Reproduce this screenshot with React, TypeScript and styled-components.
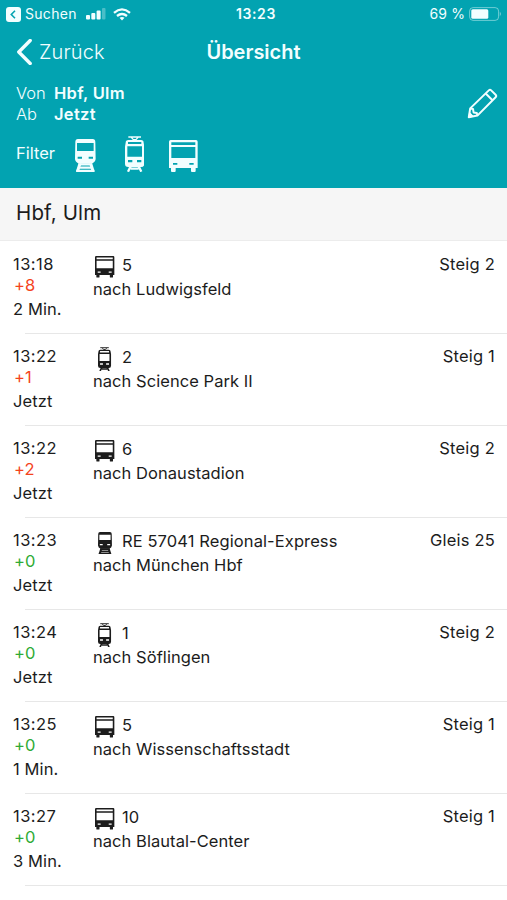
import React from "react";
import styled, { createGlobalStyle } from "styled-components";

const GlobalStyle = createGlobalStyle`
  * { box-sizing: border-box; }
  body { margin: 0; background: #fff; }
`;

const TEAL = "#02a3b1";

const Screen = styled.main`
  width: 507px;
  height: 900px;
  overflow: hidden;
  background: #fff;
  color: #1c1c1c;
  font-family: Inter, "Liberation Sans", sans-serif;
  white-space: nowrap;
`;

const Header = styled.header`
  height: 188px;
  background: ${TEAL};
  color: #f2feff;
`;

const StatusBar = styled.div`
  display: grid;
  grid-template-columns: 1fr auto 1fr;
  align-items: center;
  height: 28px;
  padding: 0 5px 0 6px;
  font-size: 14px;
  line-height: 28px;
`;

const StatusGroup = styled.div<{ $end?: boolean }>`
  display: flex;
  align-items: center;
  justify-content: ${(p) => (p.$end ? "flex-end" : "flex-start")};
  height: 28px;
`;

const BackApp = styled.span`
  width: 52px;
  margin: 0 9px 0 4px;
  letter-spacing: 0.3px;
`;

const Clock = styled.span`
  font-weight: 600;
  letter-spacing: 0.6px;
  margin-left: 4px;
`;

const Charge = styled.span`
  margin-right: 4px;
  letter-spacing: 0.1px;
`;

const Signal = styled.svg`
  margin-right: 7px;
`;

const NavBar = styled.nav`
  display: grid;
  grid-template-columns: 1fr auto 1fr;
  align-items: center;
  height: 48px;
  padding: 0 16px;
`;

const Back = styled.span`
  display: flex;
  align-items: center;
  gap: 7px;
  font-size: 20px;
  font-weight: 350;
  letter-spacing: 0.15px;
`;

const Title = styled.h1`
  margin: 0;
  font-size: 20px;
  font-weight: 600;
  letter-spacing: 0;
`;

const Query = styled.section`
  display: flex;
  justify-content: space-between;
  height: 57px;
  padding: 7px 9px 0 16px;
`;

const QueryGrid = styled.dl`
  display: grid;
  grid-template-columns: 38px auto;
  grid-auto-rows: 21px;
  margin: 0;
  font-size: 16.5px;
  line-height: 21px;
`;

const QueryLabel = styled.dt`
  font-weight: 350;
`;

const QueryValue = styled.dd`
  margin: 0;
  font-weight: 600;
  letter-spacing: 0.3px;
`;

const EditIcon = styled.svg`
  margin-top: 4px;
`;

const Filters = styled.div`
  display: flex;
  align-items: flex-start;
  padding: 3px 0 0 16px;
  font-size: 16.5px;
`;

const FilterLabel = styled.span`
  width: 45px;
  padding-top: 6px;
  line-height: 22px;
  font-weight: 400;
`;

const FilterItem = styled.span`
  display: flex;
  align-items: flex-end;
  justify-content: center;
  width: 49px;
  height: 36px;
`;

const StopName = styled.h2`
  height: 53px;
  margin: 0;
  padding-left: 16px;
  background: #f6f6f6;
  border-bottom: 1px solid #ececec;
  font-size: 20.5px;
  font-weight: 400;
  letter-spacing: 0.15px;
  line-height: 50px;
`;

const List = styled.ul`
  margin: 1px 0 0;
  padding: 0;
  list-style: none;
`;

const Departure = styled.li`
  display: grid;
  grid-template-columns: 80px 1fr auto;
  height: 92px;
  padding: 10px 12px 0 13px;
  font-size: 16.5px;
  letter-spacing: 0.1px;
  line-height: 24px;
  background: linear-gradient(#e7e7e7, #e7e7e7) 25px 100% / 100% 1px no-repeat;
`;

const Times = styled.div`
  display: flex;
  flex-direction: column;
`;

const Time = styled.span`
  letter-spacing: 0.45px;
`;

const Delay = styled.span<{ $late: boolean }>`
  height: 21px;
  padding-left: 1px;
  line-height: 18px;
  color: ${(p) => (p.$late ? "#f4431c" : "#2fab35")};
`;

const Trip = styled.div`
  display: flex;
  flex-direction: column;
  padding-top: 1px;
`;

const Line = styled.div`
  display: flex;
  gap: 5px;
  height: 24px;
  line-height: 25px;
`;

const LineIcon = styled.span`
  display: flex;
  align-items: center;
  justify-content: center;
  width: 24px;
  height: 28px;
`;

const Destination = styled.span`
  line-height: 24px;
  letter-spacing: 0.05px;
`;

const Platform = styled.span`
  letter-spacing: 0.2px;
`;

type Mode = "bus" | "tram" | "train";

const SHAPES: Record<Mode, { w: number; h: number; art: React.ReactNode }> = {
  bus: {
    w: 86,
    h: 96,
    art: (
      <path
        fillRule="evenodd"
        d="M5 0H81Q86 0 86 5V84H80V93Q80 96 77 96H69Q66 96 66 93V84H20V93Q20 96 17 96H9Q6 96 6 93V84H0V5Q0 0 5 0ZM7 7V15H79V7ZM7 21V54H79V21ZM12 69V74H25V69ZM61 69V74H74V69Z"
      />
    ),
  },
  tram: {
    w: 58,
    h: 108,
    art: (
      <>
        <path d="M10 3H48M19 4L25 11H33L39 4" fill="none" stroke="currentColor" strokeWidth="4" />
        <path
          fillRule="evenodd"
          d="M10 12H48Q56 12 56 20L58 32V83Q58 93 48 93H10Q0 93 0 83V32L2 20Q2 12 10 12ZM9 18V24H49V18ZM7 31V62H51V31ZM9 72V79H22V72ZM36 72V79H49V72Z"
        />
        <path d="M17 91L9 107M41 91L49 107M17 98H41" fill="none" stroke="currentColor" strokeWidth="7" />
      </>
    ),
  },
  train: {
    w: 62,
    h: 100,
    art: (
      <>
        <path
          fillRule="evenodd"
          d="M9 0H53Q61 0 61 9L62 60Q61 70 50 74H12Q1 70 0 60L1 9Q1 0 9 0ZM6 12V36H56V12ZM8 53V59H21V53ZM41 53V59H54V53Z"
        />
        <path d="M15 76H47M11 86H51M4 96H58" stroke="currentColor" strokeWidth="7" />
        <path d="M15 73L7 99M47 73L55 99" stroke="currentColor" strokeWidth="9" />
      </>
    ),
  },
};

function ModeIcon({ mode, scale }: { mode: Mode; scale: number }) {
  const { w, h, art } = SHAPES[mode];
  return (
    <svg width={w * scale} height={h * scale} viewBox={`0 0 ${w} ${h}`} fill="currentColor">
      {art}
    </svg>
  );
}

const departures: {
  time: string;
  delay: number;
  wait: string;
  mode: Mode;
  line: string;
  to: string;
  platform: string;
}[] = [
  { time: "13:18", delay: 8, wait: "2 Min.", mode: "bus", line: "5", to: "Ludwigsfeld", platform: "Steig 2" },
  { time: "13:22", delay: 1, wait: "Jetzt", mode: "tram", line: "2", to: "Science Park II", platform: "Steig 1" },
  { time: "13:22", delay: 2, wait: "Jetzt", mode: "bus", line: "6", to: "Donaustadion", platform: "Steig 2" },
  { time: "13:23", delay: 0, wait: "Jetzt", mode: "train", line: "RE 57041 Regional-Express", to: "München Hbf", platform: "Gleis 25" },
  { time: "13:24", delay: 0, wait: "Jetzt", mode: "tram", line: "1", to: "Söflingen", platform: "Steig 2" },
  { time: "13:25", delay: 0, wait: "1 Min.", mode: "bus", line: "5", to: "Wissenschaftsstadt", platform: "Steig 1" },
  { time: "13:27", delay: 0, wait: "3 Min.", mode: "bus", line: "10", to: "Blautal-Center", platform: "Steig 1" },
];

export default function App() {
  return (
    <Screen>
      <GlobalStyle />
      <Header>
        <StatusBar>
          <StatusGroup>
            <svg width="15" height="15" viewBox="0 0 15 15">
              <rect width="15" height="15" rx="3" fill="#f2feff" />
              <path d="M9 3.8L5.3 7.5L9 11.2" fill="none" stroke={TEAL} strokeWidth="1.6" />
            </svg>
            <BackApp>Suchen</BackApp>
            <Signal width="20" height="12" viewBox="0 0 20 12" fill="#f2feff">
              <rect x="0" y="7" width="4" height="4.5" rx="1" />
              <rect x="5.3" y="5" width="4" height="6.5" rx="1" />
              <rect x="10.6" y="2.5" width="4" height="9" rx="1" />
              <rect x="16" y="0" width="3.5" height="11.5" rx="1" opacity="0.3" />
            </Signal>
            <svg width="18" height="13" viewBox="0 0 18 13" fill="none" stroke="#f2feff" strokeWidth="2.3">
              <path d="M1 4.8Q9-2 17 4.8M4 8Q9 4 14 8" />
              <path d="M6.5 9.8Q9 8 11.5 9.8L9 12.4Z" fill="#f2feff" stroke="none" />
            </svg>
          </StatusGroup>
          <Clock>13:23</Clock>
          <StatusGroup $end>
            <Charge>69 %</Charge>
            <svg width="33" height="14" viewBox="0 0 33 14">
              <rect x="0.6" y="0.6" width="29" height="12.8" rx="3.5" fill="none" stroke="#f2feff" opacity="0.45" />
              <rect x="2.3" y="2.3" width="17" height="9.4" rx="1.5" fill="#f2feff" />
              <path d="M30.8 4.8Q33 7 30.8 9.2Z" fill="#f2feff" opacity="0.5" />
            </svg>
          </StatusGroup>
        </StatusBar>
        <NavBar>
          <Back>
            <svg width="16" height="26" viewBox="0 0 16 26" fill="none" stroke="#f2feff" strokeWidth="3.4">
              <path d="M14.2 1.5L2.8 13L14.2 24.5" strokeLinecap="round" strokeLinejoin="round" />
            </svg>
            Zurück
          </Back>
          <Title>Übersicht</Title>
        </NavBar>
        <Query>
          <QueryGrid>
            <QueryLabel>Von</QueryLabel>
            <QueryValue>Hbf, Ulm</QueryValue>
            <QueryLabel>Ab</QueryLabel>
            <QueryValue>Jetzt</QueryValue>
          </QueryGrid>
          <EditIcon width="31" height="32" viewBox="0 0 31 32" fill="none" stroke="#f2feff" strokeWidth="2" strokeLinejoin="round">
            <path d="M1.8 30.2L3.2 21.4L21.8 3.4Q23 2.2 24.2 3.4L28.6 7.8Q29.8 9 28.6 10.2L10.4 28.6Z" />
            <path d="M18.7 6.5L25.5 13.3M3.2 21.4L6 22L6.6 25.4L9.8 26L10.4 28.6" />
            <path d="M1.8 30.2L2.6 25.4L6.4 29.3Z" fill="#f2feff" strokeWidth="1" />
          </EditIcon>
        </Query>
        <Filters>
          <FilterLabel>Filter</FilterLabel>
          <FilterItem><ModeIcon mode="train" scale={1 / 3} /></FilterItem>
          <FilterItem><ModeIcon mode="tram" scale={1 / 3} /></FilterItem>
          <FilterItem><ModeIcon mode="bus" scale={1 / 3} /></FilterItem>
        </Filters>
      </Header>
      <StopName>Hbf, Ulm</StopName>
      <List>
        {departures.map((d, i) => (
          <Departure key={i}>
            <Times>
              <Time>{d.time}</Time>
              <Delay $late={d.delay > 0}>+{d.delay}</Delay>
              <span>{d.wait}</span>
            </Times>
            <Trip>
              <Line>
                <LineIcon><ModeIcon mode={d.mode} scale={0.225} /></LineIcon>
                <span>{d.line}</span>
              </Line>
              <Destination>nach {d.to}</Destination>
            </Trip>
            <Platform>{d.platform}</Platform>
          </Departure>
        ))}
      </List>
    </Screen>
  );
}
